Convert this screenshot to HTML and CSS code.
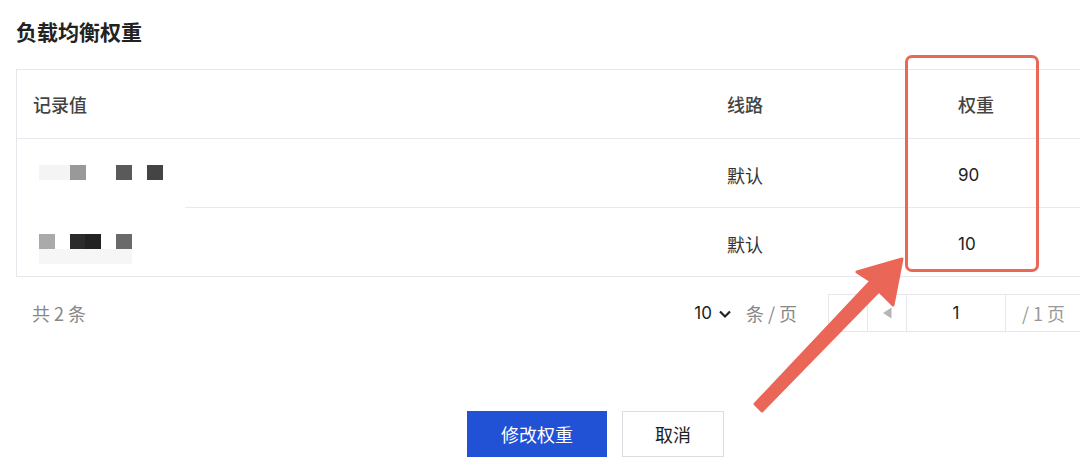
FILE: index.html
```html
<!DOCTYPE html>
<html lang="zh-CN">
<head>
<meta charset="utf-8">
<link rel="stylesheet" href="styles.css">
</head>
<body>
<div class="page">
  <h1 class="title">负载均衡权重</h1>
  <div class="table">
    <div class="row head">
      <div class="c1">记录值</div>
      <div class="c2">线路</div>
      <div class="c3">权重</div>
    </div>
    <div class="row body">
      <div class="c1 masked">
        <div class="mosaic">
          <span class="px" style="left:0;top:0;width:31px;background:#f4f4f4"></span>
          <span class="px" style="left:31px;top:0;background:#999"></span>
          <span class="px" style="left:77px;top:0;background:#5a5a5a"></span>
          <span class="px" style="left:108px;top:0;background:#444"></span>
        </div>
      </div>
      <div class="c2">默认</div>
      <div class="c3 num">90</div>
    </div>
    <div class="row body">
      <div class="c1">
        <div class="mosaic">
          <span class="px" style="left:0;top:0;background:#aaa"></span>
          <span class="px" style="left:31px;top:0;background:#2b2b2b"></span>
          <span class="px" style="left:46px;top:0;background:#222"></span>
          <span class="px" style="left:77px;top:0;background:#6a6a6a"></span>
          <span class="px" style="left:0;top:15px;width:93px;background:#f6f6f6"></span>
        </div>
      </div>
      <div class="c2">默认</div>
      <div class="c3 num">10</div>
    </div>
  </div>
  <div class="pager">
    <div class="total">共 2 条</div>
    <div class="pager-right">
      <div class="size">10 <svg class="chev" width="14" height="10" viewBox="0 0 14 10"><path d="M2 2.5 L7 7.5 L12 2.5" fill="none" stroke="#222" stroke-width="2.2"/></svg></div>
      <div class="per">条 / 页</div>
      <div class="pbox">
        <div class="pb first"></div>
        <div class="pb prev"><svg width="10" height="14" viewBox="0 0 10 14"><path d="M9.5 1.5 L1 7 L9.5 12.5 Z" fill="#b5b5b5"/></svg></div>
        <div class="pb cur">1</div>
        <div class="pb of">/ 1 页</div>
      </div>
    </div>
  </div>
  <div class="actions">
    <button class="btn primary">修改权重</button>
    <button class="btn">取消</button>
  </div>
  <div class="highlight"></div>
  <svg class="arrow" width="1080" height="472" viewBox="0 0 1080 472">
    <polygon points="902,259 857,272 871,281 755,404 762,411 879,291 893,305" fill="#ea6657" stroke="#ea6657" stroke-width="3" stroke-linejoin="round"/>
  </svg>
</div>
</body>
</html>
```
FILE: styles.css
```css
html, body {
  margin: 0;
  padding: 0;
  background: #fff;
  overflow: hidden;
}
body {
  width: 1080px;
  height: 472px;
  font-family: "Noto Sans CJK SC", "Noto Sans", sans-serif;
  color: #333;
}
.page {
  position: relative;
  width: 1080px;
  height: 472px;
}
.title {
  margin: 0;
  padding: 16px 0 0 16px;
  height: 69px;
  box-sizing: border-box;
  font-size: 21px;
  line-height: 30px;
  font-weight: 700;
  color: #222;
}
.table {
  margin-left: 16px;
  width: 1100px;
  border: 1px solid #e6e6ec;
  border-right: none;
}
.row {
  display: flex;
  height: 68px;
  align-items: center;
  border-bottom: 1px solid #e8e8ee;
  font-size: 18px;
  color: #333;
  box-sizing: content-box;
}
.row.body {
  height: 64px;
  padding-top: 4px;
}
.row:last-child {
  border-bottom: none;
}
.row.head {
  color: #444;
  font-weight: 500;
}
.c1 {
  width: 710px;
  padding-left: 16px;
  box-sizing: border-box;
  height: 100%;
  display: flex;
  align-items: center;
  position: relative;
}
.c2 {
  width: 181px;
}
.c3 {
  width: 140px;
  padding-left: 50px;
  box-sizing: border-box;
}
.num {
  font-family: "Inter", "Noto Sans", sans-serif;
  font-size: 17px;
  color: #222;
}
.masked::after {
  content: "";
  position: absolute;
  left: 0;
  width: 168px;
  bottom: -1px;
  height: 1px;
  background: #fff;
}
.mosaic {
  position: relative;
  top: 5px;
  width: 124px;
  height: 30px;
  margin-left: 6px;
}
.px {
  position: absolute;
  display: block;
  width: 16px;
  height: 15px;
}
.pager {
  margin-top: 17px;
  height: 38px;
  display: flex;
  align-items: center;
  padding-left: 32px;
}
.total {
  font-size: 18px;
  color: #888;
}
.pager-right {
  margin-left: auto;
  display: flex;
  align-items: center;
  margin-right: -20px;
}
.size {
  font-family: "Inter", "Noto Sans", sans-serif;
  font-size: 17px;
  color: #222;
  display: flex;
  align-items: center;
  gap: 6px;
}
.chev { margin-top: 1px; }
.per {
  margin-left: 14px;
  font-size: 18px;
  color: #888;
}
.pbox {
  margin-left: 31px;
  display: flex;
  height: 38px;
  border: 1px solid #e6e6ec;
  box-sizing: border-box;
}
.pb {
  display: flex;
  align-items: center;
  justify-content: center;
  border-right: 1px solid #e6e6ec;
  font-size: 18px;
}
.pb.first { width: 38px; }
.pb.prev { width: 38px; }
.pb.cur { width: 98px; color: #222; font-family: "Inter", "Noto Sans", sans-serif; font-size: 17px; }
.pb.of { width: 93px; border-right: none; color: #999; justify-content: flex-start; padding-left: 16px; box-sizing: border-box; }
.actions {
  margin-top: 79px;
  padding-left: 467px;
  display: flex;
  gap: 15px;
}
.btn {
  height: 46px;
  width: 102px;
  border: 1px solid #dcdce2;
  background: #fff;
  font-family: inherit;
  font-size: 18px;
  color: #222;
  padding: 0;
  cursor: pointer;
}
.btn.primary {
  width: 140px;
  background: #2151d5;
  border-color: #2151d5;
  color: #fff;
}
.highlight {
  position: absolute;
  left: 905px;
  top: 55px;
  width: 134px;
  height: 217px;
  box-sizing: border-box;
  border: 3px solid #ea6657;
  border-radius: 7px;
}
.arrow {
  position: absolute;
  left: 0;
  top: 0;
  pointer-events: none;
}
```
